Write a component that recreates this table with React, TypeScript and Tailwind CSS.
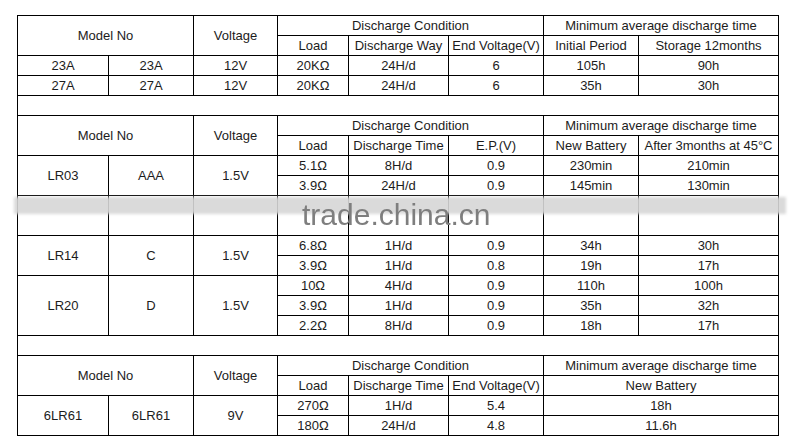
import React from "react";

type C = { t?: string; cs?: number; rs?: number };

const colSpan: Record<number, string> = {
  1: "",
  2: "col-span-2",
  3: "col-span-3",
  8: "col-span-8",
};
const rowSpan: Record<number, string> = {
  1: "",
  2: "row-span-2",
  3: "row-span-3",
};

const rows: C[][] = [
  // section 1
  [
    { t: "Model No", cs: 2, rs: 2 },
    { t: "Voltage", rs: 2 },
    { t: "Discharge Condition", cs: 3 },
    { t: "Minimum average discharge time", cs: 2 },
  ],
  [
    { t: "Load" },
    { t: "Discharge Way" },
    { t: "End Voltage(V)" },
    { t: "Initial Period" },
    { t: "Storage 12months" },
  ],
  [
    { t: "23A" },
    { t: "23A" },
    { t: "12V" },
    { t: "20KΩ" },
    { t: "24H/d" },
    { t: "6" },
    { t: "105h" },
    { t: "90h" },
  ],
  [
    { t: "27A" },
    { t: "27A" },
    { t: "12V" },
    { t: "20KΩ" },
    { t: "24H/d" },
    { t: "6" },
    { t: "35h" },
    { t: "30h" },
  ],
  [{ t: "", cs: 8 }],
  // section 2
  [
    { t: "Model No", cs: 2, rs: 2 },
    { t: "Voltage", rs: 2 },
    { t: "Discharge Condition", cs: 3 },
    { t: "Minimum average discharge time", cs: 2 },
  ],
  [
    { t: "Load" },
    { t: "Discharge Time" },
    { t: "E.P.(V)" },
    { t: "New Battery" },
    { t: "After 3months at 45°C" },
  ],
  [
    { t: "LR03", rs: 2 },
    { t: "AAA", rs: 2 },
    { t: "1.5V", rs: 2 },
    { t: "5.1Ω" },
    { t: "8H/d" },
    { t: "0.9" },
    { t: "230min" },
    { t: "210min" },
  ],
  [
    { t: "3.9Ω" },
    { t: "24H/d" },
    { t: "0.9" },
    { t: "145min" },
    { t: "130min" },
  ],
  [
    { t: "", rs: 2 },
    { t: "", rs: 2 },
    { t: "", rs: 2 },
    { t: "", rs: 2 },
    { t: "", rs: 2 },
    { t: "", rs: 2 },
    { t: "", rs: 2 },
    { t: "", rs: 2 },
  ],
  [
    { t: "LR14", rs: 2 },
    { t: "C", rs: 2 },
    { t: "1.5V", rs: 2 },
    { t: "6.8Ω" },
    { t: "1H/d" },
    { t: "0.9" },
    { t: "34h" },
    { t: "30h" },
  ],
  [
    { t: "3.9Ω" },
    { t: "1H/d" },
    { t: "0.8" },
    { t: "19h" },
    { t: "17h" },
  ],
  [
    { t: "LR20", rs: 3 },
    { t: "D", rs: 3 },
    { t: "1.5V", rs: 3 },
    { t: "10Ω" },
    { t: "4H/d" },
    { t: "0.9" },
    { t: "110h" },
    { t: "100h" },
  ],
  [
    { t: "3.9Ω" },
    { t: "1H/d" },
    { t: "0.9" },
    { t: "35h" },
    { t: "32h" },
  ],
  [
    { t: "2.2Ω" },
    { t: "8H/d" },
    { t: "0.9" },
    { t: "18h" },
    { t: "17h" },
  ],
  [{ t: "", cs: 8 }],
  // section 3
  [
    { t: "Model No", cs: 2, rs: 2 },
    { t: "Voltage", rs: 2 },
    { t: "Discharge Condition", cs: 3 },
    { t: "Minimum average discharge time", cs: 2 },
  ],
  [
    { t: "Load" },
    { t: "Discharge Time" },
    { t: "End Voltage(V)" },
    { t: "New Battery", cs: 2 },
  ],
  [
    { t: "6LR61", rs: 2 },
    { t: "6LR61", rs: 2 },
    { t: "9V", rs: 2 },
    { t: "270Ω" },
    { t: "1H/d" },
    { t: "5.4" },
    { t: "18h", cs: 2 },
  ],
  [
    { t: "180Ω" },
    { t: "24H/d" },
    { t: "4.8" },
    { t: "11.6h", cs: 2 },
  ],
];

export default function App() {
  return (
    <div className="relative w-[795px] h-[448px] bg-white overflow-hidden font-['Liberation_Sans',Arial,sans-serif]">
      <div className="pt-[15px] pl-[17px]">
        <div className="grid w-fit grid-cols-[90px_84px_83px_70px_99px_94px_94px_139px] auto-rows-[19px] gap-px bg-black p-px">
          {rows.flat().map((c, i) => (
            <div
              key={i}
              className={`flex items-center justify-center bg-white text-[13px] leading-none text-[#1c1c1c] whitespace-nowrap ${colSpan[c.cs ?? 1]} ${rowSpan[c.rs ?? 1]}`}
            >
              {c.t}
            </div>
          ))}
        </div>
      </div>
      {/* watermark band */}
      <div className="absolute left-[14px] top-[197px] w-[772px] h-[17px] bg-[#d6d6d6] opacity-90 blur-[1.5px]" />
      <div className="absolute left-[302px] top-[200px] text-[30px] leading-none text-[#7e7e7e] blur-[0.6px] whitespace-nowrap">
        trade.china.cn
      </div>
    </div>
  );
}
